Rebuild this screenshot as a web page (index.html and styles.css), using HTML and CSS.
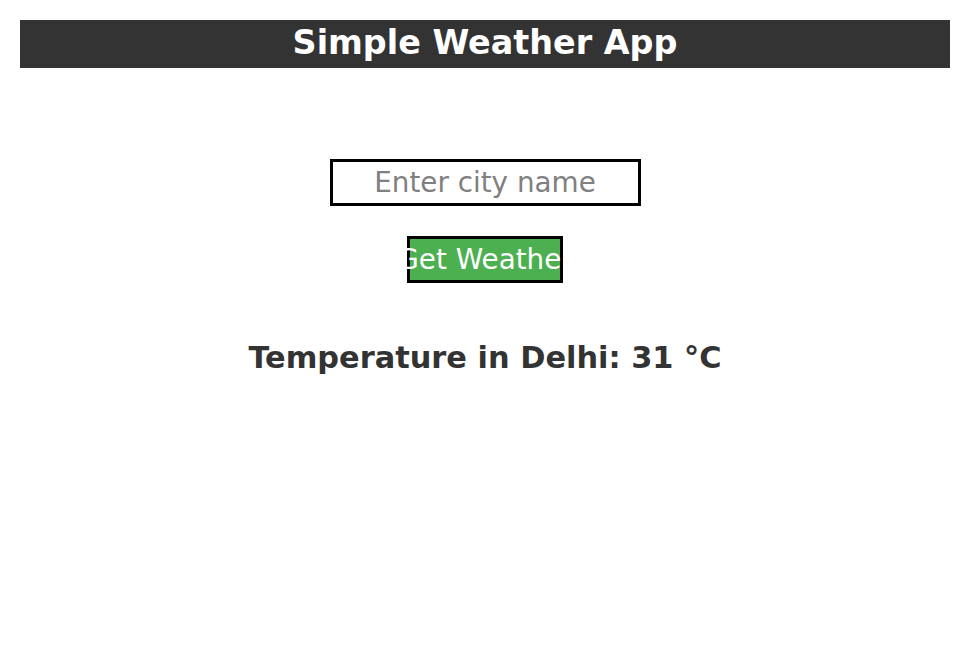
FILE: index.html
```html
<!DOCTYPE html>
<html>
<head>
<meta charset="utf-8">
<link rel="stylesheet" href="styles.css">
</head>
<body>
<header class="bar"><h1 class="title">Simple Weather App</h1></header>
<main class="main">
  <input class="city" type="text" placeholder="Enter city name">
  <button class="btn">Get Weather</button>
  <p class="result">Temperature in Delhi: 31 °C</p>
</main>
</body>
</html>
```
FILE: styles.css
```css
html, body { margin: 0; padding: 0; background: #fff; }
body { padding: 20px 19px 20px 20px; font-family: "DejaVu Sans", sans-serif; }
.bar { box-sizing: border-box; background: #333; height: 48px; padding-bottom: 4px; display: flex; align-items: center; justify-content: center; }
.title { margin: 0; color: #fff; font-size: 33.4px; font-weight: bold; font-family: "DejaVu Sans", sans-serif; }
.main { display: flex; flex-direction: column; align-items: center; padding-top: 91px; }
.city { box-sizing: border-box; width: 311px; height: 47px; border: 3px solid #000; font-family: "DejaVu Sans", sans-serif; font-size: 27.8px; text-align: center; padding: 0; outline: none; }
.city::placeholder { color: #808080; }
.btn { box-sizing: border-box; margin-top: 30px; width: 156px; height: 47px; border: 3px solid #000; background: #4CAF50; color: #fff; font-family: "DejaVu Sans", sans-serif; font-size: 27.8px; padding: 0; white-space: nowrap; display: flex; align-items: center; justify-content: center; }
.result { margin: 57px 0 0; font-size: 30.4px; font-weight: bold; color: #333; }
```
